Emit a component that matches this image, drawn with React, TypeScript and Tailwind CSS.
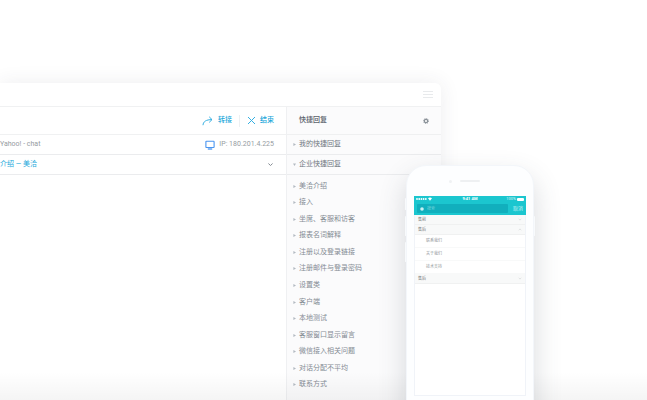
import { ReactNode } from "react";

const replies = [
  "美洽介绍",
  "接入",
  "坐席、客服和访客",
  "报表名词解释",
  "注册以及登录链接",
  "注册邮件与登录密码",
  "设置类",
  "客户端",
  "本地测试",
  "客服窗口显示留言",
  "微信接入相关问题",
  "对话分配不平均",
  "联系方式",
];

const contacts = ["联系我们", "关于我们", "技术支持"];

function Arrow({ down = false }: { down?: boolean }) {
  return (
    <svg viewBox="0 0 4 4" className="w-[3px] h-[3px] shrink-0" fill="#b3bac1">
      {down ? <path d="M0 0.5h4L2 4z" /> : <path d="M0.5 0L4 2L0.5 4z" />}
    </svg>
  );
}

function Chevron({ up = false, className }: { up?: boolean; className: string }) {
  return (
    <svg viewBox="0 0 8 6" className={className} fill="none" stroke="currentColor" strokeWidth="1.2">
      <path d={up ? "M1.5 4.2L4 1.8l2.5 2.4" : "M1.5 1.8L4 4.2l2.5-2.4"} />
    </svg>
  );
}

function ChatPanel() {
  return (
    <section className="flex-1 min-w-0 bg-white">
      {/* Actions */}
      <div className="h-7 flex items-center justify-end pr-3 border-b border-[#f0f1f2] text-[#22a7da]">
        <button className="flex items-center gap-[5px] font-medium">
          <svg viewBox="0 0 11 10" className="w-[11px] h-[10px]" fill="none" stroke="#35b0e2" strokeWidth="1">
            <path d="M1 9.2C1.2 5.6 4 3.6 10 3.6M7.2 0.8L10 3.6 7.2 6.4" />
          </svg>
          转接
        </button>
        <span className="w-px h-3 mx-[7px] bg-[#edf0f2]" />
        <button className="flex items-center gap-1 font-medium">
          <svg viewBox="0 0 9 9" className="w-[9px] h-[9px]" fill="none" stroke="#35b0e2" strokeWidth="1">
            <path d="M1 1l7 7M8 1L1 8" />
          </svg>
          结束
        </button>
      </div>

      {/* Visitor source */}
      <div className="h-5 flex items-center justify-between pr-3 border-b border-[#ebecee] text-[#969ca2]">
        <span>Yahoo! - chat</span>
        <span className="flex items-center gap-1">
          <svg viewBox="0 0 10 10" className="w-[10px] h-[10px]" fill="none" stroke="#4a95f0">
            <rect x="0.9" y="1.3" width="8.2" height="6.2" rx="0.6" strokeWidth="1.1" />
            <path d="M2.8 9h4.4" strokeWidth="1.3" />
          </svg>
          IP: 180.201.4.225
        </span>
      </div>
      <div className="h-5 flex items-center justify-between pr-3 border-b border-[#ebecee]">
        <a href="#" className="text-[#22a7da]">介绍 — 美洽</a>
        <button aria-label="展开" className="text-[#858c94]">
          <Chevron className="w-[7px] h-[5px]" />
        </button>
      </div>
    </section>
  );
}

function QuickReplies() {
  return (
    <aside className="w-[155px] shrink-0 bg-[#fbfbfc] border-l border-[#eff0f2] text-[#6f7780]">
      <div className="h-7 flex items-center justify-between px-3 border-b border-[#eff0f1]">
        <h2 className="font-medium text-[#59616a]">快捷回复</h2>
        <button aria-label="设置">
          <svg viewBox="0 0 10 10" className="w-[6px] h-[6px]" fill="none" stroke="#8a9198">
            <circle cx="5" cy="5" r="2.8" strokeWidth="2" />
            <circle cx="5" cy="5" r="4.3" strokeWidth="1.4" strokeDasharray="1.69 1.69" />
          </svg>
        </button>
      </div>
      <div className="h-5 flex items-center gap-[3px] pl-[6px] border-b border-[#ebecee]">
        <Arrow />
        我的快捷回复
      </div>
      <div className="h-5 flex items-center gap-[3px] pl-[6px] border-b border-[#ebecee]">
        <Arrow down />
        企业快捷回复
      </div>
      <ul className="mt-[3px] h-[215px] grid auto-rows-fr text-[#858c94]">
        {replies.map((reply) => (
          <li key={reply} className="flex items-center gap-[3px] pl-[6px]">
            <Arrow />
            {reply}
          </li>
        ))}
      </ul>
    </aside>
  );
}

function Group({ title, open = false }: { title: string; open?: boolean }) {
  return (
    <div className="h-[10px] flex items-center justify-between px-[3px] bg-[#f8f9f9] border-b border-[#f0f1f1] text-[#777]">
      {title}
      <Chevron up={open} className="w-1 h-[3px] text-[#cfd2d2]" />
    </div>
  );
}

function PhoneButton({ className }: { className: string }) {
  return <span className={`absolute w-px rounded-sm bg-[#f8fafc] ${className}`} />;
}

function Phone({ children }: { children: ReactNode }) {
  return (
    <div className="absolute top-[165px] right-[113px] w-32 h-[260px] rounded-t-[20px] border border-[#f3f6fa] bg-[#fdfeff] px-[7px] shadow-[0_12px_28px_rgba(60,70,85,0.2)]">
      <PhoneButton className="-left-[2px] top-8 h-3" />
      <PhoneButton className="-left-[2px] top-[50px] h-5" />
      <PhoneButton className="-left-[2px] top-[76px] h-5" />
      <PhoneButton className="-right-[2px] top-[50px] h-5" />
      <div className="h-[30px] flex items-center justify-center gap-2 pr-3">
        <span className="w-[3px] h-[3px] rounded-full bg-[#f0f2f4]" />
        <span className="w-5 h-[2px] rounded-full bg-[#eef0f2]" />
      </div>
      {children}
    </div>
  );
}

function MobileApp() {
  return (
    <div className="h-[200px] bg-white border-x border-b border-[#f0f3f8] text-[4px] leading-none">
      <div className="-mx-px bg-[#1bc6cf] text-white">
        {/* Status bar */}
        <div className="h-[6px] grid grid-cols-3 items-center px-[2px]">
          <svg viewBox="0 0 16 4" className="w-4 h-1" fill="currentColor">
            <circle cx="1" cy="2" r="0.9" />
            <circle cx="3.2" cy="2" r="0.9" />
            <circle cx="5.4" cy="2" r="0.9" />
            <circle cx="7.6" cy="2" r="0.9" />
            <circle cx="9.8" cy="2" r="0.9" />
            <path d="M12 1.2Q14 -0.4 16 1.2L14 3.8z" />
          </svg>
          <span className="text-center font-bold">9:41 AM</span>
          <span className="flex items-center justify-end gap-px">
            <span className="opacity-80">100%</span>
            <span className="w-[7px] h-[3px] rounded-[1px] bg-white" />
          </span>
        </div>
        <div className="h-[13px] flex items-center gap-[5px] px-[3px]">
          <label className="flex-1 min-w-0 h-[9px] flex items-center gap-[3px] px-[3px] rounded-[1px] bg-[#11afbd]">
            <svg viewBox="0 0 4 4" className="w-1 h-1 shrink-0" fill="#c8f0f3">
              <circle cx="2" cy="2" r="1.8" />
            </svg>
            <input
              type="text"
              aria-label="搜索"
              placeholder="搜索"
              className="w-full min-w-0 h-[9px] bg-transparent outline-none placeholder:text-[#6fd3da]"
            />
          </label>
          <button className="text-[5px] text-[#c3f1f4]">取消</button>
        </div>
      </div>

      <Group title="售前" />
      <Group title="售后" open />
      <ul className="text-[#92979b]">
        {contacts.map((contact) => (
          <li key={contact} className="h-[13px] flex items-center pl-[11px] border-b border-[#f8f9f9]">
            {contact}
          </li>
        ))}
      </ul>
      <Group title="售后" />
    </div>
  );
}

export default function App() {
  return (
    <main className="relative h-screen overflow-hidden bg-white pt-[83px] pr-[206px] font-[Roboto,'Noto_Sans_CJK_SC',sans-serif] text-[7px] leading-none">
      <div className="rounded-tr-md bg-white shadow-[0_0_20px_rgba(50,60,75,0.09)]">
        <header className="h-6 flex items-center justify-end pr-2 border-b border-[#f0f1f2]">
          <button aria-label="菜单" className="text-[#e8eaec]">
            <svg viewBox="0 0 10 7" className="w-[10px] h-[7px]" fill="none" stroke="currentColor">
              <path d="M0 0.5h10M0 3.5h10M0 6.5h10" />
            </svg>
          </button>
        </header>
        <div className="flex min-h-[300px]">
          <ChatPanel />
          <QuickReplies />
        </div>
      </div>

      {/* Fade at the fold */}
      <div className="absolute inset-x-0 bottom-0 h-7 bg-gradient-to-b from-transparent to-black/4 pointer-events-none"></div>

      <Phone>
        <MobileApp />
      </Phone>
    </main>
  );
}
